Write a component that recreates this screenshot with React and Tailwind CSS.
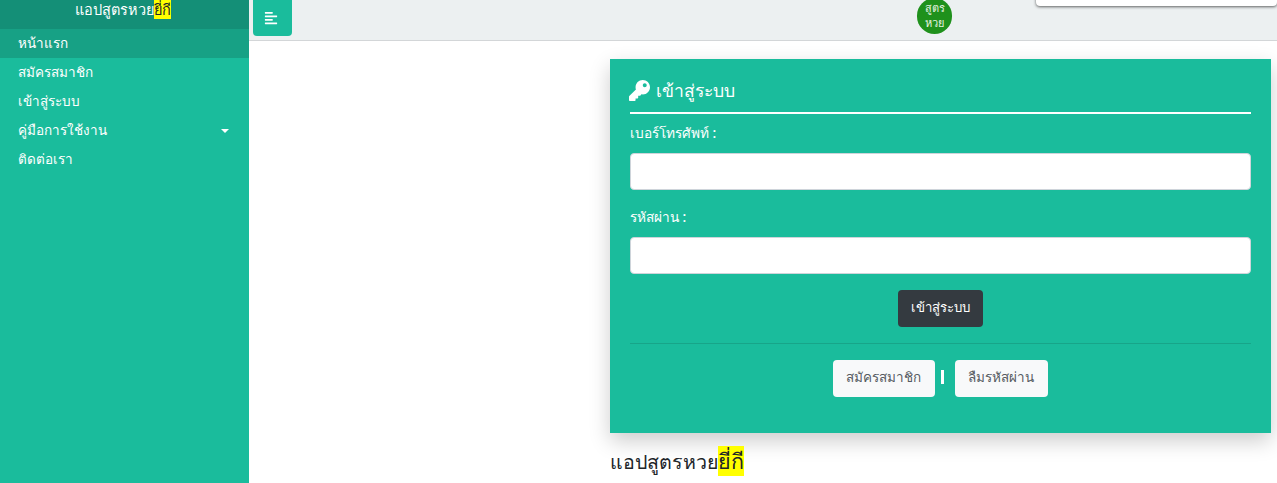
import React from "react";
import { FaAlignLeft, FaKey } from "react-icons/fa";

const font = "font-['Noto_Sans','Liberation_Sans',sans-serif]";

const menu = [
  { label: "หน้าแรก", active: true },
  { label: "สมัครสมาชิก" },
  { label: "เข้าสู่ระบบ" },
  { label: "คู่มือการใช้งาน", caret: true },
  { label: "ติดต่อเรา" },
];

const Sidebar = () => (
  <aside className="w-[249px] shrink-0 bg-[#1abc9c] text-white">
    <div className="h-[29px] flex justify-center items-start overflow-hidden bg-[#148f77] text-[14.5px] leading-[19px] pr-[4px]">
      <span>
        แอปสูตรหวย<span className="bg-[#ffff00] text-[#212529]">ยี่กี</span>
      </span>
    </div>
    <ul>
      {menu.map((item) => (
        <li
          key={item.label}
          className={`h-[29px] flex items-center justify-between pl-[18px] pr-[20px] pb-[1px] text-[13.5px] font-medium ${
            item.active ? "bg-[#17a185]" : ""
          }`}
        >
          {item.label}
          {item.caret && (
            <span className="w-0 h-0 mt-[2px] border-x-[4.5px] border-x-transparent border-t-[4.5px] border-t-white" />
          )}
        </li>
      ))}
    </ul>
  </aside>
);

const Navbar = () => (
  <header className="relative h-[41px] shrink-0 flex bg-[#ecf0f1] border-b border-[#d3d6d8] pl-[4px]">
    <button className="w-[39px] h-[36px] flex items-center justify-center bg-[#1abc9c] text-white rounded-b-[4px]">
      <FaAlignLeft className="text-[14px] -ml-[3px]" />
    </button>
    <div className="ml-[625px] -mt-[2px] w-[35px] h-[36px] pb-[2px] rounded-full bg-[#1f911c] flex flex-col items-center justify-center text-[#e6f3e0] text-[11px] leading-[15px] overflow-hidden">
      <span>สูตร</span>
      <span>หวย</span>
    </div>
    <div className="absolute top-[-10px] right-0 w-[241px] h-[16px] bg-white rounded-[4px] shadow-[0_1px_3px_rgba(0,0,0,0.6)]" />
  </header>
);

const Field = ({ label }) => (
  <div>
    <label className="block h-[20px] leading-[20px] text-[13.7px] font-medium text-white">{label}</label>
    <input className="block w-full h-[37px] mt-[10px] bg-white rounded-[4px] border border-[#ced4da]" />
  </div>
);

const LoginCard = () => (
  <section className="h-[374px] bg-[#1abc9c] px-[20px] pt-[17px] shadow-[0_8px_20px_rgba(0,0,0,0.2)]">
    <h2 className="h-[38px] flex items-center gap-[6px] text-white text-[17.5px] font-medium border-b-2 border-white pb-[8px]">
      <FaKey className="text-[21px] -ml-[1px]" />
      เข้าสู่ระบบ
    </h2>
    <div className="mt-[9px] flex flex-col gap-[17px]">
      <Field label="เบอร์โทรศัพท์ :" />
      <Field label="รหัสผ่าน :" />
    </div>
    <div className="mt-[16px] flex justify-center">
      <button className="w-[85px] h-[37px] pb-[2px] rounded-[4px] bg-[#343a40] text-white text-[13.2px] font-medium">เข้าสู่ระบบ</button>
    </div>
    <div className="mt-[16px] border-t border-[#17a589]" />
    <div className="mt-[16px] flex justify-center gap-[5px]">
      <button className="-ml-[1px] w-[102px] h-[37px] pb-[2px] rounded-[4px] bg-[#f8f9fa] text-[#555b61] text-[13.5px]">สมัครสมาชิก</button>
      <span className="w-[3px] h-[14px] mt-[10px] mx-[1px] bg-white" />
      <button className="ml-[5px] w-[93px] h-[37px] pb-[2px] rounded-[4px] bg-[#f8f9fa] text-[#555b61] text-[13.5px]">ลืมรหัสผ่าน</button>
    </div>
  </section>
);

export default function App() {
  return (
    <div className={`h-[483px] overflow-hidden flex bg-white ${font}`}>
      <Sidebar />
      <div className="flex-1 flex flex-col min-w-0">
        <Navbar />
        <main className="flex justify-end pr-[6px] pt-[18px]">
          <div className="w-[661px]">
            <LoginCard />
            <p className="mt-[13px] h-[30px] leading-[30px] text-[19.6px] text-[#212529]">
              แอปสูตรหวย<span className="inline-block bg-[#ffff00] font-medium text-[21.5px]">ยี่กี</span>
            </p>
          </div>
        </main>
      </div>
    </div>
  );
}
